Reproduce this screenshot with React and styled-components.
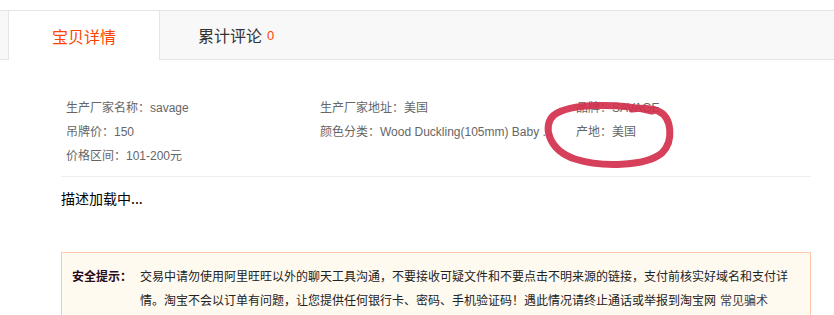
import React from "react";
import styled, { createGlobalStyle } from "styled-components";

const GlobalStyle = createGlobalStyle`
    body {
        margin: 0;
        background: #fff;
        font-family: Tahoma, "Liberation Sans", "Noto Sans CJK SC", sans-serif;
    }
`;

const Page = styled.div`
    padding-top: 10px;
    width: 834px;
`;

const TabBar = styled.div`
    display: flex;
    height: 48px;
    padding-left: 8px;
    background: #f8f8f8;
    border-top: 1px solid #e5e5e5;
    border-bottom: 1px solid #e5e5e5;
`;

const Tab = styled.div`
    width: 150px;
    height: ${(p) => (p.$active ? "49px" : "48px")};
    display: flex;
    align-items: center;
    justify-content: center;
    font-size: 16px;
    font-family: "Noto Sans CJK SC", sans-serif;
    color: ${(p) => (p.$active ? "#ff4400" : "#333")};
    background: ${(p) => (p.$active ? "#fff" : "transparent")};
    border-left: 1px solid ${(p) => (p.$active ? "#e5e5e5" : "transparent")};
    border-right: 1px solid ${(p) => (p.$active ? "#e5e5e5" : "transparent")};
`;

const Count = styled.span`
    font-size: 13px;
    color: #ff4400;
    margin-left: 5px;
    font-family: "Liberation Sans", sans-serif;
`;

const Content = styled.div`
    width: 750px;
    margin-left: 61px;
`;

const Attributes = styled.ul`
    position: relative;
    list-style: none;
    margin: 0;
    padding: 36px 0 8px 5px;
    display: grid;
    grid-template-columns: 254px 256px 1fr;
    border-bottom: 1px solid #eeeeee;
`;

const Attr = styled.li`
    height: 24px;
    line-height: 24px;
    font-size: 12px;
    color: #666;
    white-space: nowrap;
    overflow: hidden;
`;

const Circle = styled.svg`
    position: absolute;
    left: 479px;
    top: 35px;
    width: 140px;
    height: 80px;
    overflow: visible;
`;

const Loading = styled.div`
    padding-top: 10px;
    height: 22px;
    line-height: 22px;
    font-size: 14px;
    color: #000;
    font-family: "Noto Sans CJK SC", sans-serif;
`;

const Notice = styled.div`
    margin-top: 43px;
    display: flex;
    padding: 11px 10px 10px;
    background: #fffaf0;
    border: 1px solid #fcc9ae;
    font-size: 12px;
    line-height: 24px;
    color: #222;
    font-family: "Noto Sans CJK SC", sans-serif;
`;

const NoticeLabel = styled.div`
    flex: 0 0 68px;
    font-weight: bold;
    color: #2a0a1a;
`;

const NoticeText = styled.div`
    width: 650px;
`;

const NoticeLink = styled.a`
    color: #3a3d4a;
    text-decoration: none;
    margin-left: 4px;
`;

const attrs = [
    "生产厂家名称：savage",
    "生产厂家地址：美国",
    "品牌：SAVAGE",
    "吊牌价：150",
    "颜色分类：Wood Duckling(105mm) Baby ...",
    "产地：美国",
    "价格区间：101-200元",
];

export default function App() {
    return (
        <Page>
            <GlobalStyle />
            <TabBar>
                <Tab $active>宝贝详情</Tab>
                <Tab>
                    累计评论<Count>0</Count>
                </Tab>
            </TabBar>
            <Content>
                <Attributes>
                    {attrs.map((a) => (
                        <Attr key={a}>{a}</Attr>
                    ))}
                    <Circle viewBox="0 0 140 80">
                        <path
                            d="M112 16 C80 8, 30 8, 14 20 C2 30, 8 55, 35 64 C60 72, 105 72, 122 58 C134 46, 132 22, 118 16 C110 13, 100 13, 92 14"
                            fill="none"
                            stroke="#d3304c"
                            strokeWidth="7"
                            strokeLinecap="round"
                            opacity="0.92"
                        />
                    </Circle>
                </Attributes>
                <Loading>描述加载中...</Loading>
                <Notice>
                    <NoticeLabel>安全提示：</NoticeLabel>
                    <NoticeText>
                        交易中请勿使用阿里旺旺以外的聊天工具沟通，不要接收可疑文件和不要点击不明来源的链接，支付前核实好域名和支付详情。淘宝不会以订单有问题，让您提供任何银行卡、密码、手机验证码！遇此情况请终止通话或举报到淘宝网
                        <NoticeLink href="#">常见骗术</NoticeLink>
                    </NoticeText>
                </Notice>
            </Content>
        </Page>
    );
}
